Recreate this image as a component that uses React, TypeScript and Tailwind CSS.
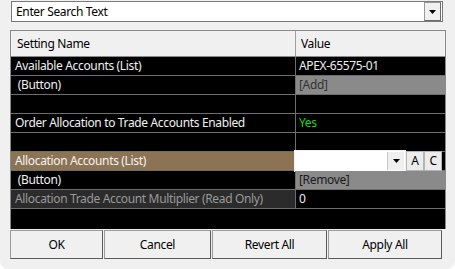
import React from "react";

type Row = {
  name: string;
  value?: string;
  kind?: "normal" | "button" | "empty" | "selected" | "readonly";
  valueClass?: string;
};

const ROWS: Row[] = [
  { name: "Available Accounts (List)", value: "APEX-65575-01" },
  { name: " (Button)", value: "[Add]", kind: "button", valueClass: "text-[#333333]" },
  { name: "", kind: "empty" },
  { name: "Order Allocation to Trade Accounts Enabled", value: "Yes", valueClass: "text-[#1ed21e]" },
  { name: "", kind: "empty" },
  { name: "Allocation Accounts (List)", kind: "selected" },
  { name: " (Button)", value: "[Remove]", kind: "button", valueClass: "text-[#1a1a1a]" },
  { name: "Allocation Trade Account Multiplier (Read Only)", value: "0", kind: "readonly" },
];

function Caret() {
  return (
    <svg width="7" height="4" viewBox="0 0 7 4">
      <path d="M0 0 H7 L3.5 4 Z" fill="#000" />
    </svg>
  );
}

function GridRow({ row }: { row: Row }) {
  const nameBg =
    row.kind === "selected"
      ? "bg-[#8b7354] text-[#f4f4f4]"
      : row.kind === "readonly"
      ? "bg-[#2b2b2b] text-[#9a9a9a]"
      : "bg-black text-[#f0f0f0]";
  const valueBg = row.kind === "button" ? "bg-[#8a8a8a]" : "bg-black";

  return (
    <div className="flex h-[19px] border-b border-[#6e6e6e]">
      <div className={`flex w-[284px] items-center whitespace-pre pl-[4px] ${nameBg}`}>
        {row.name}
      </div>
      <div className={`relative flex flex-1 items-center border-l border-[#6e6e6e] pl-[3px] ${valueBg} ${row.valueClass ?? "text-[#f0f0f0]"}`}>
        {row.value}
        {row.kind === "selected" && (
          <div className="absolute left-[-2px] top-[-2px] flex h-[22px] items-stretch">
            <div className="flex w-[112px] items-center justify-end border border-[#f0f0f0] bg-white pr-[1px]">
              <div className="flex h-[18px] w-[17px] items-center justify-center border-l border-[#c8c8c8] bg-[#f0f0f0]">
                <Caret />
              </div>
            </div>
            <div className="flex h-[20px] w-[18px] items-center justify-center self-center border border-[#b4b4b4] bg-[#ececec] text-black">
              A
            </div>
            <div className="flex h-[20px] w-[18px] items-center justify-center self-center border border-[#b4b4b4] bg-[#ececec] text-black">
              C
            </div>
          </div>
        )}
      </div>
    </div>
  );
}

export default function App() {
  return (
    <div
      className="relative h-[269px] w-[455px] overflow-hidden rounded-b-[8px] bg-[#f0f0f0] text-[12px] tracking-[-0.35px] text-black"
      style={{ fontFamily: '"Noto Sans", "Open Sans", sans-serif' }}
    >
      {/* Search combo */}
      <div className="ml-[11px] mt-[1px] flex h-[21px] w-[432px] items-center border border-[#7a7a7a] bg-white pl-[4px]">
        <span className="flex-1">Enter Search Text</span>
        <div className="mr-[1px] flex h-[19px] w-[17px] items-center justify-center border border-[#9a9a9a] border-b-[#6a6a6a] border-r-[#6a6a6a] bg-[#f0f0f0]">
          <Caret />
        </div>
      </div>

      {/* Property grid */}
      <div className="ml-[10px] mt-[8px] w-[436px] border-x border-t border-[#8a8a8a] bg-black">
        <div className="flex h-[26px] border-b border-[#8a8a8a] bg-[#f0f0f0]">
          <div className="flex w-[284px] items-center pl-[6px]">Setting Name</div>
          <div className="flex flex-1 items-center border-l border-[#a0a0a0] pl-[5px]">Value</div>
        </div>
        {ROWS.map((row, i) => (
          <GridRow key={i} row={row} />
        ))}
        <div className="h-[20px] bg-black" />
      </div>

      {/* Buttons */}
      <div className="ml-[10px] mt-[1px] flex h-[29px] w-[432px] gap-[1px]">
        {[
          ["OK", "w-[93px]"],
          ["Cancel", "w-[107px]"],
          ["Revert All", "w-[115px]"],
          ["Apply All", "w-[114px]"],
        ].map(([label, w]) => (
          <button
            key={label}
            className={`${w} flex items-center justify-center border border-[#9a9a9a] border-b-[#5a5a5a] border-r-[#5a5a5a] bg-[#f0f0f0]`}
          >
            {label}
          </button>
        ))}
      </div>
    </div>
  );
}
